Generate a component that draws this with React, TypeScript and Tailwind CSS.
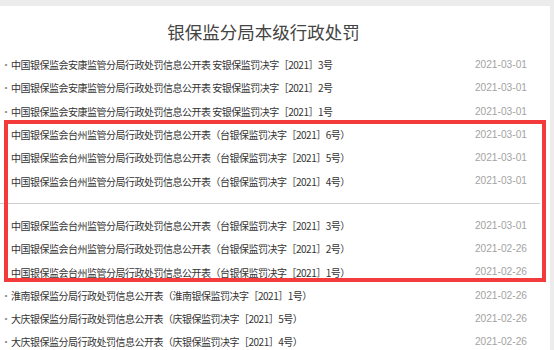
import React from 'react';

interface Item {
  title: string;
  date: string;
}

const groupA: Item[] = [
  { title: '中国银保监会安康监管分局行政处罚信息公开表 安银保监罚决字［2021］3号', date: '2021-03-01' },
  { title: '中国银保监会安康监管分局行政处罚信息公开表 安银保监罚决字［2021］2号', date: '2021-03-01' },
  { title: '中国银保监会安康监管分局行政处罚信息公开表 安银保监罚决字［2021］1号', date: '2021-03-01' },
  { title: '中国银保监会台州监管分局行政处罚信息公开表（台银保监罚决字［2021］6号）', date: '2021-03-01' },
  { title: '中国银保监会台州监管分局行政处罚信息公开表（台银保监罚决字［2021］5号）', date: '2021-03-01' },
  { title: '中国银保监会台州监管分局行政处罚信息公开表（台银保监罚决字［2021］4号）', date: '2021-03-01' },
];

const groupB: Item[] = [
  { title: '中国银保监会台州监管分局行政处罚信息公开表（台银保监罚决字［2021］3号）', date: '2021-03-01' },
  { title: '中国银保监会台州监管分局行政处罚信息公开表（台银保监罚决字［2021］2号）', date: '2021-02-26' },
  { title: '中国银保监会台州监管分局行政处罚信息公开表（台银保监罚决字［2021］1号）', date: '2021-02-26' },
  { title: '淮南银保监分局行政处罚信息公开表（淮南银保监罚决字［2021］1号）', date: '2021-02-26' },
  { title: '大庆银保监分局行政处罚信息公开表（庆银保监罚决字［2021］5号）', date: '2021-02-26' },
  { title: '大庆银保监分局行政处罚信息公开表（庆银保监罚决字［2021］4号）', date: '2021-02-26' },
];

function Row({ item }: { item: Item }) {
  return (
    <li className="flex h-[23.3px] items-center">
      <span className="w-[11px] shrink-0 pl-[1px] text-[10px] text-[#888]">·</span>
      <span className="flex-1 truncate text-[10px] tracking-[-0.5px] text-[#333]">{item.title}</span>
      <span className="shrink-0 font-['Liberation_Sans',sans-serif] text-[10.2px] text-[#a3a3a3]">{item.date}</span>
    </li>
  );
}

export default function App() {
  return (
    <div className="h-[350px] w-[554px] overflow-hidden bg-[#ececec] pr-[4px] pt-[6px] font-['Noto_Sans_CJK_SC',sans-serif]">
      <div className="relative h-full bg-white pr-[23px]">
        <h1 className="pt-[14px] text-center text-[17.5px] leading-[24px] text-[#444]">银保监分局本级行政处罚</h1>

        <ul className="mt-[9px]">
          {groupA.map((item, i) => (
            <Row key={i} item={item} />
          ))}
        </ul>

        <div className="my-[10px] h-px w-[540px] bg-[#cfcfcf]" />

        <ul>
          {groupB.map((item, i) => (
            <Row key={i} item={item} />
          ))}
        </ul>

        {/* annotation box drawn over the list */}
        <div className="pointer-events-none absolute left-[4px] top-[114px] h-[162px] w-[542px] border-[4px] border-[#f43b3b]" />
      </div>
    </div>
  );
}
